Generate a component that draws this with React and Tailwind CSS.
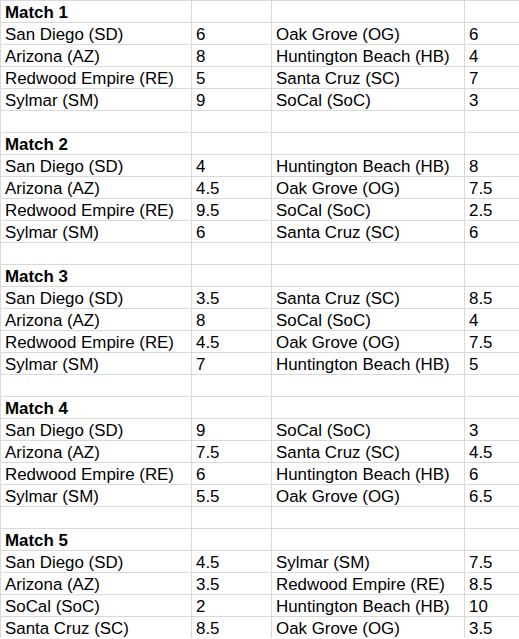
import React from "react";

const matches = [
  [
    ["San Diego (SD)", "6", "Oak Grove (OG)", "6"],
    ["Arizona (AZ)", "8", "Huntington Beach (HB)", "4"],
    ["Redwood Empire (RE)", "5", "Santa Cruz (SC)", "7"],
    ["Sylmar (SM)", "9", "SoCal (SoC)", "3"],
  ],
  [
    ["San Diego (SD)", "4", "Huntington Beach (HB)", "8"],
    ["Arizona (AZ)", "4.5", "Oak Grove (OG)", "7.5"],
    ["Redwood Empire (RE)", "9.5", "SoCal (SoC)", "2.5"],
    ["Sylmar (SM)", "6", "Santa Cruz (SC)", "6"],
  ],
  [
    ["San Diego (SD)", "3.5", "Santa Cruz (SC)", "8.5"],
    ["Arizona (AZ)", "8", "SoCal (SoC)", "4"],
    ["Redwood Empire (RE)", "4.5", "Oak Grove (OG)", "7.5"],
    ["Sylmar (SM)", "7", "Huntington Beach (HB)", "5"],
  ],
  [
    ["San Diego (SD)", "9", "SoCal (SoC)", "3"],
    ["Arizona (AZ)", "7.5", "Santa Cruz (SC)", "4.5"],
    ["Redwood Empire (RE)", "6", "Huntington Beach (HB)", "6"],
    ["Sylmar (SM)", "5.5", "Oak Grove (OG)", "6.5"],
  ],
  [
    ["San Diego (SD)", "4.5", "Sylmar (SM)", "7.5"],
    ["Arizona (AZ)", "3.5", "Redwood Empire (RE)", "8.5"],
    ["SoCal (SoC)", "2", "Huntington Beach (HB)", "10"],
    ["Santa Cruz (SC)", "8.5", "Oak Grove (OG)", "3.5"],
  ],
];

function Cell({ children, bold }) {
  return (
    <div
      className={
        "h-[22px] border-t border-l border-[#d9d9d9] pl-[4px] pt-[1px] leading-[21px] whitespace-nowrap overflow-hidden " +
        (bold ? "font-bold" : "")
      }
    >
      {children}
    </div>
  );
}

export default function App() {
  const rows = [];
  matches.forEach((m, i) => {
    rows.push(["Match " + (i + 1), "", "", ""]);
    m.forEach((r) => rows.push(r));
    if (i < matches.length - 1) rows.push(["", "", "", ""]);
  });

  return (
    <div
      className="w-[519px] h-[639px] overflow-hidden bg-white text-black text-[16.9px]"
      style={{ fontFamily: '"Liberation Sans", Arial, sans-serif' }}
    >
      <div className="grid grid-cols-[191px_80px_193px_55px]">
        {rows.map((r, i) =>
          r.map((c, j) => (
            <Cell key={i + "-" + j} bold={j === 0 && c.startsWith("Match")}>
              {c}
            </Cell>
          ))
        )}
      </div>
    </div>
  );
}
